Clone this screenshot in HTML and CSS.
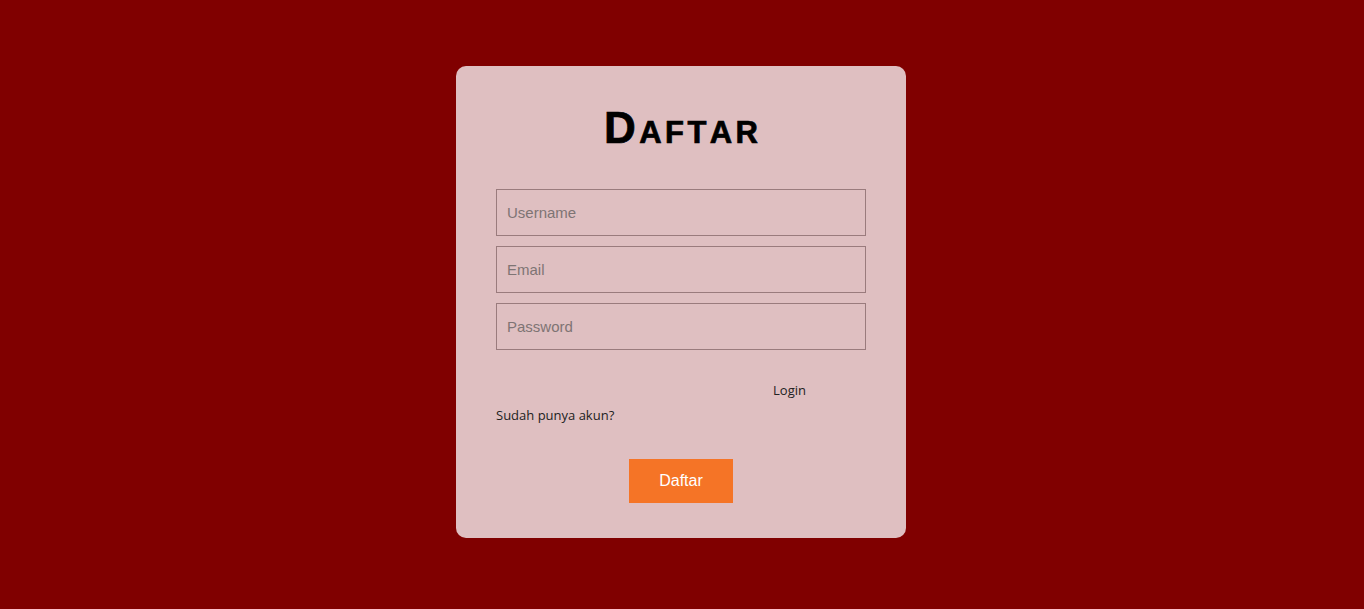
FILE: index.html
```html
<!DOCTYPE html>
<html lang="id">
<head>
<meta charset="utf-8">
<title>Daftar</title>
<link rel="stylesheet" href="styles.css">
</head>
<body>
<main class="page">
  <form class="card">
    <h1 class="title">Daftar</h1>
    <div class="fields">
      <input class="field" type="text" placeholder="Username">
      <input class="field" type="email" placeholder="Email">
      <input class="field" type="password" placeholder="Password">
    </div>
    <div class="links">
      <a class="login" href="#">Login</a>
      <p class="note">Sudah punya akun?</p>
    </div>
    <div class="actions">
      <button class="btn" type="button">Daftar</button>
    </div>
  </form>
</main>
</body>
</html>
```

FILE: styles.css
```css
html, body {
  margin: 0;
  padding: 0;
}
body {
  background: #800000;
  font-family: "Liberation Sans", Arial, sans-serif;
  height: 609px;
}
.page {
  display: flex;
  justify-content: center;
  padding-top: 66px;
  padding-right: 2px;
}
.card {
  width: 450px;
  height: 472px;
  box-sizing: border-box;
  background: #dfbfc1;
  border-radius: 10px;
  padding: 0 40px;
  display: flex;
  flex-direction: column;
}
.title {
  margin: 34px 0 0;
  text-align: center;
  font-variant: small-caps;
  font-weight: bold;
  font-size: 44px;
  line-height: 56px;
  letter-spacing: 3.4px;
  text-indent: 3.4px;
  font-kerning: none;
  color: #000;
  -webkit-text-stroke: 0.7px #000;
}
.fields {
  margin-top: 33px;
  display: flex;
  flex-direction: column;
  gap: 10px;
}
.field {
  height: 47px;
  box-sizing: border-box;
  border: 1px solid #9a7b7d;
  background: transparent;
  padding: 0 10px;
  font-family: "Liberation Sans", Arial, sans-serif;
  font-size: 15px;
  color: #333;
  outline: none;
}
.field::placeholder {
  color: #7e7474;
}
.links {
  margin-top: 31px;
  display: flex;
  flex-direction: column;
  font-family: "Open Sans", "Noto Sans", sans-serif;
  font-size: 13px;
  color: #222;
}
.login {
  align-self: flex-end;
  margin-right: 60px;
  color: #222;
  text-decoration: none;
  line-height: 18px;
}
.note {
  margin: 7px 0 0;
  line-height: 18px;
}
.actions {
  margin-top: 35px;
  display: flex;
  justify-content: center;
}
.btn {
  width: 104px;
  height: 44px;
  border: none;
  background: #f57426;
  color: #fff;
  font-family: "Liberation Sans", Arial, sans-serif;
  font-size: 16px;
  cursor: pointer;
}
```
